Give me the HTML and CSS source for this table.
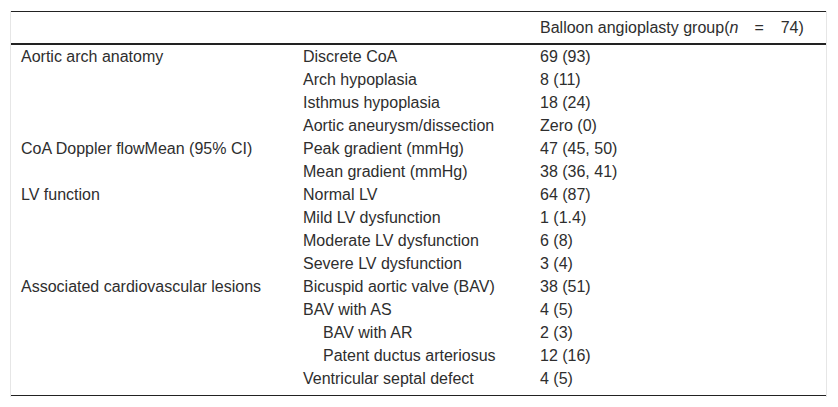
FILE: index.html
```html
<!DOCTYPE html>
<html>
<head>
<meta charset="utf-8">
<link rel="stylesheet" href="styles.css">
</head>
<body>
<div class="wrap">
<table class="tbl">
<colgroup><col class="c1"><col class="c2"><col class="c3"></colgroup>
<thead>
<tr><th></th><th></th><th>Balloon angioplasty group(<i>n</i><span class="eq">=</span><span class="num">74)</span></th></tr>
</thead>
<tbody>
<tr><td>Aortic arch anatomy</td><td>Discrete CoA</td><td>69 (93)</td></tr>
<tr><td></td><td>Arch hypoplasia</td><td>8 (11)</td></tr>
<tr><td></td><td>Isthmus hypoplasia</td><td>18 (24)</td></tr>
<tr><td></td><td>Aortic aneurysm/dissection</td><td>Zero (0)</td></tr>
<tr><td>CoA Doppler flowMean (95% CI)</td><td>Peak gradient (mmHg)</td><td>47 (45, 50)</td></tr>
<tr><td></td><td>Mean gradient (mmHg)</td><td>38 (36, 41)</td></tr>
<tr><td>LV function</td><td>Normal LV</td><td>64 (87)</td></tr>
<tr><td></td><td>Mild LV dysfunction</td><td>1 (1.4)</td></tr>
<tr><td></td><td>Moderate LV dysfunction</td><td>6 (8)</td></tr>
<tr><td></td><td>Severe LV dysfunction</td><td>3 (4)</td></tr>
<tr><td>Associated cardiovascular lesions</td><td>Bicuspid aortic valve (BAV)</td><td>38 (51)</td></tr>
<tr><td></td><td>BAV with AS</td><td>4 (5)</td></tr>
<tr><td></td><td class="ind">BAV with AR</td><td>2 (3)</td></tr>
<tr><td></td><td class="ind">Patent ductus arteriosus</td><td>12 (16)</td></tr>
<tr class="last"><td></td><td>Ventricular septal defect</td><td>4 (5)</td></tr>
</tbody>
</table>
</div>
</body>
</html>
```

FILE: styles.css
```css
html, body {
  margin: 0;
  padding: 0;
  background: #fff;
}
body {
  font-family: "Liberation Sans", Arial, sans-serif;
  font-size: 16px;
  color: #2e2e2e;
}
.wrap {
  margin: 11px 11px 0 10px;
  width: 815px;
  border-left: 1px solid #e6e6e6;
  border-right: 1px solid #e6e6e6;
  padding-bottom: 1px;
}
.tbl {
  width: 815px;
  table-layout: fixed;
  border-collapse: collapse;
  border-top: 1px solid #222;
  border-bottom: 1px solid #222;
}
.c1 { width: 282px; }
.c2 { width: 237px; }
.c3 { width: 296px; }
.tbl th {
  font-weight: normal;
  text-align: left;
  padding: 6px 10px;
  line-height: 19px;
  border-bottom: 2px solid #222;
  white-space: nowrap;
}
.tbl td {
  padding: 2px 10px;
  line-height: 19px;
  vertical-align: top;
  white-space: nowrap;
}
.tbl td.ind {
  padding-left: 30px;
}
.tbl tr.last td {
  padding-bottom: 7px;
}
.eq {
  margin: 0 17px 0 16px;
}
```
